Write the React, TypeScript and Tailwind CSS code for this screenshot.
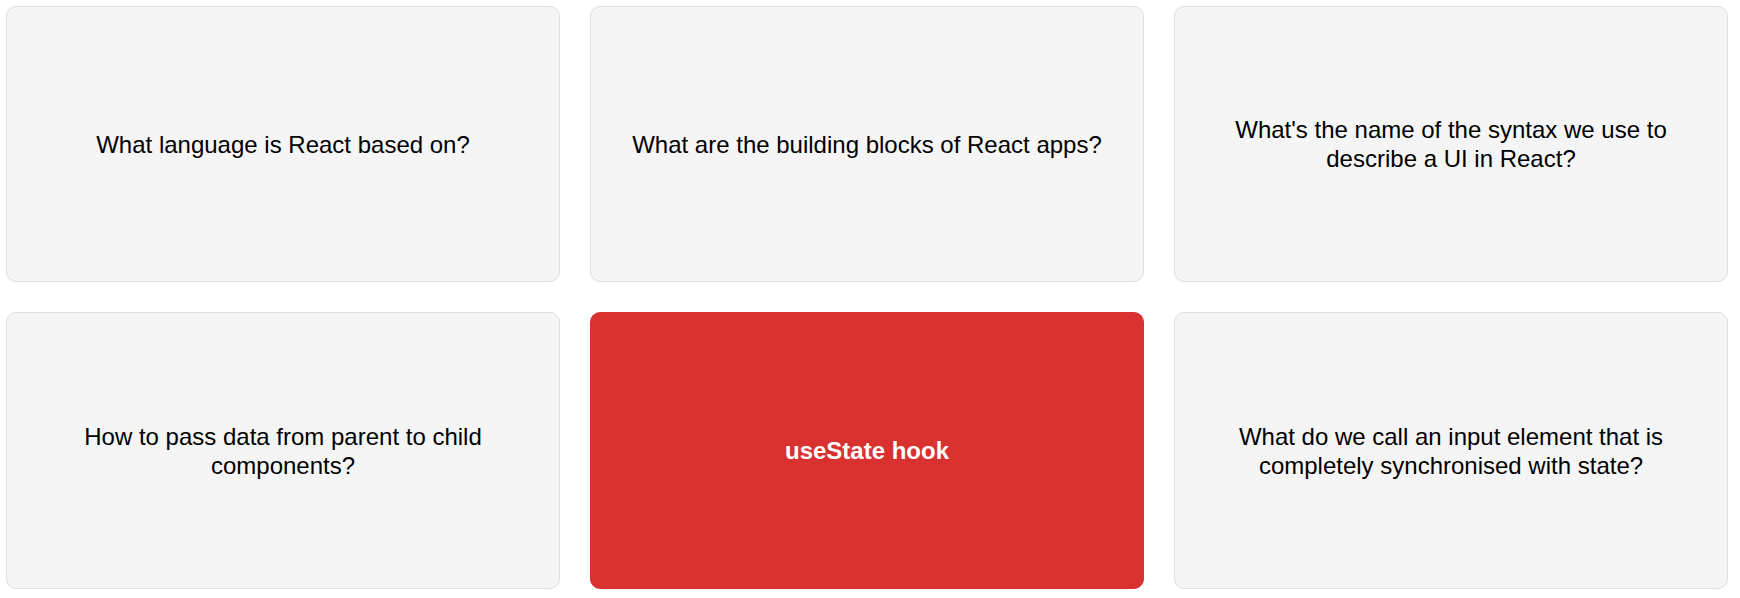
import React from "react";

const cards = [
  { text: "What language is React based on?", active: false },
  { text: "What are the building blocks of React apps?", active: false },
  { text: "What's the name of the syntax we use to describe a UI in React?", active: false },
  { text: "How to pass data from parent to child components?", active: false },
  { text: "useState hook", active: true },
  { text: "What do we call an input element that is completely synchronised with state?", active: false },
];

export default function App() {
  return (
    <div
      className="min-h-[598px] bg-white pt-[6px] pl-[6px] pr-[12px]"
      style={{ fontFamily: '"Liberation Sans", Arial, sans-serif' }}
    >
      <div className="grid grid-cols-3 grid-rows-[276px_277px] gap-[30px]">
        {cards.map((c, i) => (
          <div
            key={i}
            className={
              c.active
                ? "flex items-center justify-center text-center rounded-[10px] border border-[#d93030] bg-[#d93030] text-white font-bold px-8 text-[24px] leading-[29px]"
                : "flex items-center justify-center text-center rounded-[10px] border border-[#e0e0e0] bg-[#f5f5f5] text-black px-8 text-[24px] leading-[29px]"
            }
          >
            {c.text}
          </div>
        ))}
      </div>
    </div>
  );
}
